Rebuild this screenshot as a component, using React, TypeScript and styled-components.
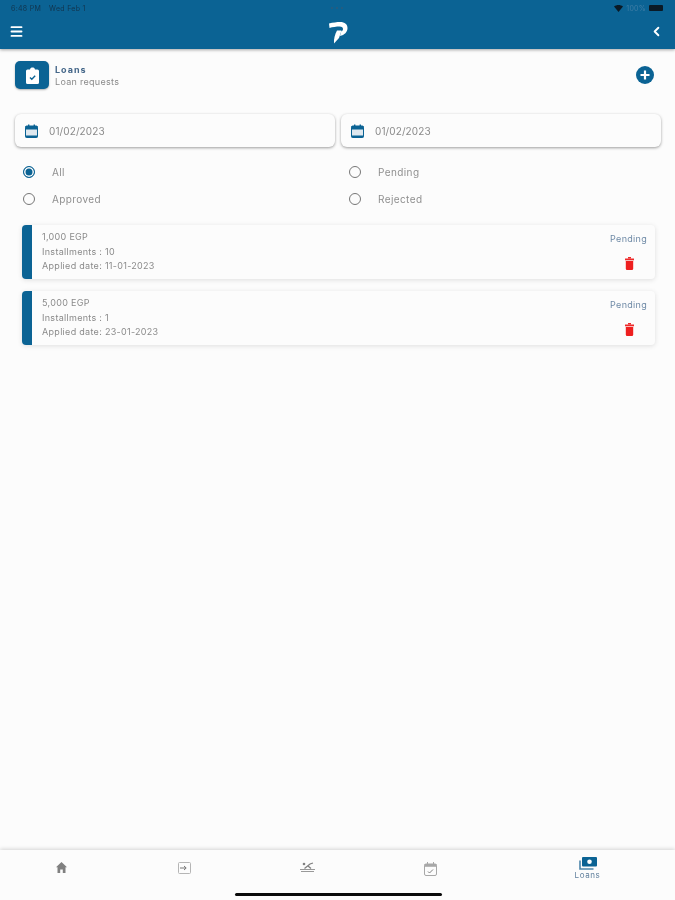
import React from 'react';
import styled, { createGlobalStyle } from 'styled-components';
import { Menu, ChevronLeft } from 'lucide-react';

const brand = '#0b6394';

const GlobalStyle = createGlobalStyle`
  html, body { margin: 0; padding: 0; background: #fcfcfc; }
  * { box-sizing: border-box; }
  body { font-family: Inter, "Noto Sans", sans-serif; }
`;

const Screen = styled.div`
  width: 675px;
  height: 900px;
  display: flex;
  flex-direction: column;
  overflow: hidden;
  background: #fcfcfc;
  position: relative;
  filter: blur(0.35px);
`;

const TopBar = styled.header`
  height: 49px;
  flex: none;
  background: ${brand};
  box-shadow: 0 1px 3px rgba(0, 0, 0, 0.35);
  display: flex;
  flex-direction: column;
`;

const StatusRow = styled.div`
  height: 16px;
  padding: 0 12px 0 11px;
  display: grid;
  grid-template-columns: 1fr auto 1fr;
  align-items: center;
  font-size: 7px;
  letter-spacing: 0.3px;
  color: #12344d;
`;

const StatusLeft = styled.div`
  display: flex;
  gap: 8px;
`;

const StatusDots = styled.div`
  display: flex;
  gap: 3px;
`;

const StatusDot = styled.span`
  width: 2px;
  height: 2px;
  border-radius: 50%;
  background: #2c5b7c;
`;

const StatusRight = styled.div`
  display: flex;
  align-items: center;
  justify-content: flex-end;
  gap: 3px;
  color: #3f7ea6;
`;

const Battery = styled.span`
  width: 14px;
  height: 6px;
  border-radius: 1px;
  background: #0a1a26;
`;

const NavRow = styled.div`
  flex: 1;
  padding: 0 11px 3px 9px;
  display: flex;
  align-items: center;
  justify-content: space-between;
  color: #fff;
`;

const LogoMark = styled.svg`
  margin: 2px 0 0 3px;
`;

const Main = styled.main`
  flex: 1;
  padding: 12px 14px 0 15px;
  display: flex;
  flex-direction: column;
`;

const PageHead = styled.div`
  display: flex;
  align-items: center;
  justify-content: space-between;
  height: 28px;
  padding-right: 7px;
`;

const HeadLeft = styled.div`
  display: flex;
  align-items: center;
  gap: 6px;
`;

const IconTile = styled.div`
  width: 34px;
  height: 28px;
  border-radius: 5px;
  background: ${brand};
  display: flex;
  align-items: center;
  justify-content: center;
  box-shadow: 0 1px 2px rgba(0, 0, 0, 0.3);
`;

const HeadTitle = styled.div`
  font-size: 9px;
  font-weight: 700;
  letter-spacing: 1px;
  color: #46688a;
  line-height: 12px;
`;

const HeadSub = styled.div`
  font-size: 9px;
  letter-spacing: 0.3px;
  color: #8a8a8a;
  line-height: 11px;
`;

const DateRow = styled.div`
  display: grid;
  grid-template-columns: 320px 320px;
  gap: 6px;
  margin-top: 25px;
`;

const DateField = styled.div`
  height: 33px;
  border-radius: 6px;
  background: #fcfcfc;
  box-shadow: 0 1px 3px rgba(0, 0, 0, 0.38);
  display: flex;
  align-items: center;
  gap: 11px;
  padding-left: 10px;
  font-size: 10px;
  letter-spacing: 0.1px;
  color: #8a8a8a;
`;

const RadioGrid = styled.div`
  display: grid;
  grid-template-columns: 326px 1fr;
  row-gap: 14px;
  margin-top: 18px;
  padding-left: 8px;
`;

const RadioItem = styled.div`
  display: flex;
  align-items: center;
  gap: 17px;
  height: 13px;
  font-size: 10px;
  letter-spacing: 0.4px;
  color: #8f8f8f;
`;

const RadioDot = styled.span<{ $on?: boolean }>`
  width: 12px;
  height: 12px;
  flex: none;
  border-radius: 50%;
  border: 1.5px solid ${p => (p.$on ? brand : '#777')};
  background: ${p => (p.$on ? brand : 'transparent')};
  box-shadow: ${p => (p.$on ? 'inset 0 0 0 1.5px #fcfcfc' : 'none')};
`;

const LoanList = styled.div`
  display: flex;
  flex-direction: column;
  gap: 12px;
  margin-top: 20px;
  padding: 0 6px 0 7px;
`;

const LoanCard = styled.div`
  height: 54px;
  display: flex;
  border-radius: 4px;
  background: #fcfcfc;
  box-shadow: 0 1px 5px rgba(0, 0, 0, 0.12);
  overflow: hidden;
`;

const CardStripe = styled.div`
  width: 10px;
  flex: none;
  background: ${brand};
`;

const CardBody = styled.div`
  flex: 1;
  padding: 6px 0 0 10px;
  display: flex;
  flex-direction: column;
  gap: 2.5px;
  font-size: 9px;
  line-height: 12px;
  letter-spacing: 0.3px;
  color: #8a8a8a;
`;

const CardSide = styled.div`
  padding: 8px 8px 0 0;
  display: flex;
  flex-direction: column;
  align-items: flex-end;
  gap: 12px;
`;

const StatusLabel = styled.div`
  font-size: 9px;
  line-height: 12px;
  letter-spacing: 0.3px;
  color: #6f8aa6;
`;

const DeleteIcon = styled.span`
  width: 36px;
  display: flex;
  justify-content: center;
`;

const BottomBar = styled.nav`
  height: 50px;
  flex: none;
  display: grid;
  grid-template-columns: 123px 123px 123px 123px 183px;
  background: #fcfcfc;
  box-shadow: 0 -1px 4px rgba(0, 0, 0, 0.16);
`;

const TabItem = styled.div<{ $active?: boolean }>`
  display: flex;
  flex-direction: column;
  align-items: center;
  padding-top: ${p => (p.$active ? '7px' : '12px')};
  padding-left: ${p => (p.$active ? '8px' : '0')};
  font-size: 8px;
  line-height: 10px;
  letter-spacing: 0.6px;
  color: ${p => (p.$active ? '#5f7f9c' : '#8a8a8a')};
`;

const HomeBar = styled.div`
  position: absolute;
  left: 235px;
  bottom: 4px;
  width: 207px;
  height: 3px;
  border-radius: 2px;
  background: #0a0a0a;
`;

const Logo = () => (
  <LogoMark width="19" height="23" viewBox="0 0 19 23">
    <path d="M0 2.500C4 1.500 8 1 11 1c5 0 7.500 2.500 7.500 6 0 4-3 7-7.500 8l1-4.500c1.500-.5 2-1.500 2-2.500 0-1.500-1-2.500-3.500-2.500-3 0-7 .5-10 1.500z" fill="#fff" />
    <path d="M8 9.500h4.500L10 17l-5 5.500C4.500 18 6 13.500 8 9.500z" fill="#fff" />
  </LogoMark>
);

const Wifi = () => (
  <svg width="9" height="7" viewBox="0 0 9 7">
    <path d="M0 1.500C2.500-.5 6.500-.5 9 1.500L4.500 7z" fill="#0a1a26" />
  </svg>
);

const PlusBadge = () => (
  <svg width="18" height="18" viewBox="0 0 18 18">
    <circle cx="9" cy="9" r="9" fill={brand} />
    <path d="M9 4.500v9M4.500 9h9" stroke="#fff" strokeWidth="2.200" />
  </svg>
);

const ClipboardFilled = () => (
  <svg width="13" height="17" viewBox="0 0 13 17">
    <path d="M1.500 2.500H4C4.300 1 5.200.5 6.500.5S8.700 1 9 2.500h2.500A1.500 1.500 0 0 1 13 4v11.500a1.500 1.500 0 0 1-1.500 1.500h-10A1.500 1.500 0 0 1 0 15.500V4a1.500 1.500 0 0 1 1.500-1.500z" fill="#fff" />
    <path d="M4 10.500l1.800 1.800L9.200 8.800" fill="none" stroke={brand} strokeWidth="1.400" />
  </svg>
);

const CalendarFilled = () => (
  <svg width="13" height="14" viewBox="0 0 13 14">
    <rect x="0.500" y="2" width="12" height="11.500" rx="1.200" fill="#dfe8ef" stroke={brand} />
    <rect x="0.500" y="2" width="12" height="3.500" fill={brand} />
    <rect x="3" y="0.500" width="1.400" height="2.500" fill={brand} />
    <rect x="8.600" y="0.500" width="1.400" height="2.500" fill={brand} />
    <rect x="0.500" y="11.500" width="12" height="2" fill={brand} />
  </svg>
);

const TrashFilled = () => (
  <svg width="9" height="13" viewBox="0 0 9 13">
    <rect x="0" y="1.500" width="9" height="1.800" fill="#ee2a2a" />
    <rect x="3" y="0" width="3" height="1.500" fill="#ee2a2a" />
    <path d="M.8 4h7.400v7.700A1.300 1.300 0 0 1 6.900 13H2.100A1.300 1.300 0 0 1 .8 11.700z" fill="#ee1f1f" />
  </svg>
);

const HomeTab = () => (
  <svg width="11" height="11" viewBox="0 0 11 11">
    <path d="M5.500 0L11 5.200H9.500V11H6.800V7.500H4.200V11H1.500V5.200H0z" fill="#808080" />
  </svg>
);

const EntryTab = () => (
  <svg width="13" height="12" viewBox="0 0 13 12">
    <rect x="0.500" y="0.500" width="12" height="11" rx="1" fill="none" stroke="#b5b5b5" />
    <path d="M2 6h6M6 4l2.200 2L6 8" fill="none" stroke="#777" />
  </svg>
);

const SwimTab = () => (
  <svg width="15" height="10" viewBox="0 0 15 10">
    <circle cx="4" cy="2" r="1.300" fill="#808080" />
    <path d="M4.500 6.500L10 2l3-1M8 4l3 2.500" fill="none" stroke="#808080" strokeWidth="1.300" />
    <path d="M0 7.500h15M1 9.500h13" stroke="#999" />
  </svg>
);

const CalendarTab = () => (
  <svg width="13" height="14" viewBox="0 0 13 14">
    <rect x="0.500" y="2" width="12" height="11.500" rx="1.500" fill="none" stroke="#a8a8a8" />
    <rect x="0.500" y="2" width="12" height="2.800" fill="#a8a8a8" />
    <path d="M3.500 0v2.500M9.500 0v2.500" stroke="#a8a8a8" />
    <path d="M4 9.500l1.500 1.500L9 7.500" fill="none" stroke="#808080" />
  </svg>
);

const CashTab = () => (
  <svg width="18" height="13" viewBox="0 0 18 13">
    <rect x="3" y="0" width="15" height="9.500" rx="1" fill={brand} />
    <circle cx="10.500" cy="4.800" r="2.300" fill="#fff" />
    <path d="M1 3.500V12h13.500" fill="none" stroke="#4c86ab" strokeWidth="1.600" />
  </svg>
);

const loans = [
  { amount: '1,000 EGP', installments: 10, applied: '11-01-2023' },
  { amount: '5,000 EGP', installments: 1, applied: '23-01-2023' },
];

const App: React.FC = () => {
  return (
    <Screen>
      <GlobalStyle />
      <TopBar>
        <StatusRow>
          <StatusLeft>
            <span>6:48 PM</span>
            <span>Wed Feb 1</span>
          </StatusLeft>
          <StatusDots>
            <StatusDot />
            <StatusDot />
            <StatusDot />
          </StatusDots>
          <StatusRight>
            <Wifi />
            <span>100%</span>
            <Battery />
          </StatusRight>
        </StatusRow>
        <NavRow>
          <Menu size={15} strokeWidth={3} />
          <Logo />
          <ChevronLeft size={15} strokeWidth={3} />
        </NavRow>
      </TopBar>

      <Main>
        <PageHead>
          <HeadLeft>
            <IconTile>
              <ClipboardFilled />
            </IconTile>
            <div>
              <HeadTitle>Loans</HeadTitle>
              <HeadSub>Loan requests</HeadSub>
            </div>
          </HeadLeft>
          <PlusBadge />
        </PageHead>

        <DateRow>
          {[0, 1].map(i => (
            <DateField key={i}>
              <CalendarFilled />
              01/02/2023
            </DateField>
          ))}
        </DateRow>

        <RadioGrid>
          <RadioItem><RadioDot $on />All</RadioItem>
          <RadioItem><RadioDot />Pending</RadioItem>
          <RadioItem><RadioDot />Approved</RadioItem>
          <RadioItem><RadioDot />Rejected</RadioItem>
        </RadioGrid>

        <LoanList>
          {loans.map(loan => (
            <LoanCard key={loan.applied}>
              <CardStripe />
              <CardBody>
                <div>{loan.amount}</div>
                <div>Installments : {loan.installments}</div>
                <div>Applied date: {loan.applied}</div>
              </CardBody>
              <CardSide>
                <StatusLabel>Pending</StatusLabel>
                <DeleteIcon><TrashFilled /></DeleteIcon>
              </CardSide>
            </LoanCard>
          ))}
        </LoanList>
      </Main>

      <BottomBar>
        <TabItem><HomeTab /></TabItem>
        <TabItem><EntryTab /></TabItem>
        <TabItem><SwimTab /></TabItem>
        <TabItem><CalendarTab /></TabItem>
        <TabItem $active><CashTab />Loans</TabItem>
      </BottomBar>
      <HomeBar />
    </Screen>
  );
};

export default App;
